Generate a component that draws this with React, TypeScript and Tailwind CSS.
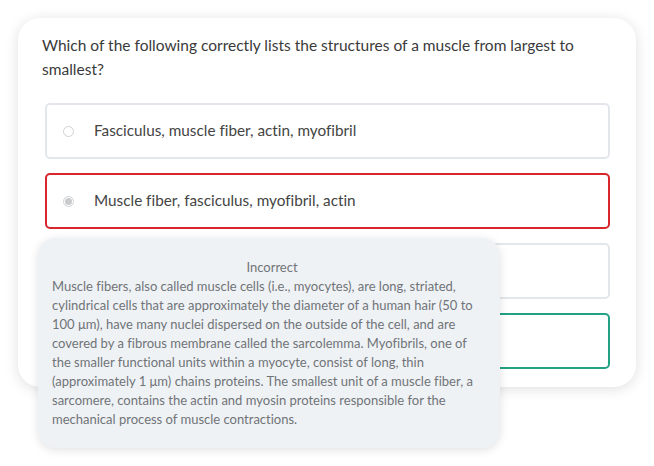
import React from 'react';

interface OptionProps {
  label: string;
  state?: 'idle' | 'wrong' | 'right';
  checked?: boolean;
}

const Option: React.FC<OptionProps> = ({ label, state = 'idle', checked = false }) => {
  const border =
    state === 'wrong'
      ? 'border-[#d9262b]'
      : state === 'right'
      ? 'border-[#23a184]'
      : 'border-[#e3e7eb]';
  return (
    <div className={`flex items-center h-[56px] rounded-[5px] border-2 ${border} bg-white pl-[16px]`}>
      <span className="flex items-center justify-center w-[11px] h-[11px] rounded-full border border-[#cfd2d5] bg-white">
        {checked && <span className="w-[7px] h-[7px] rounded-full bg-[#c8cacc]"></span>}
      </span>
      <span className="ml-[20px] text-[15.3px] text-[#444] leading-none">{label}</span>
    </div>
  );
};

const explanation = [
  'Muscle fibers, also called muscle cells (i.e., myocytes), are long, striated,',
  'cylindrical cells that are approximately the diameter of a human hair (50 to',
  '100 μm), have many nuclei dispersed on the outside of the cell, and are',
  'covered by a fibrous membrane called the sarcolemma. Myofibrils, one of',
  'the smaller functional units within a myocyte, consist of long, thin',
  '(approximately 1 μm) chains proteins. The smallest unit of a muscle fiber, a',
  'sarcomere, contains the actin and myosin proteins responsible for the',
  'mechanical process of muscle contractions.',
];

export default function App() {
  return (
    <div
      className="relative w-[654px] h-[466px] bg-white [font-variant-ligatures:none]"
      style={{ fontFamily: 'Lato, "Liberation Sans", sans-serif' }}
    >
      <div className="pt-[18px] pl-[18px]">
        <div className="w-[618px] rounded-[22px] bg-white shadow-[0_2px_14px_rgba(0,0,0,0.13)] pt-[15px] pb-[18px] pl-[24px] pr-[26px]">
          <p className="text-[15.5px] leading-[24px] text-[#3a3a3a] pr-[20px]">
            Which of the following correctly lists the structures of a muscle from largest to smallest?
          </p>
          <div className="mt-[22px] ml-[3px] flex flex-col gap-[14px]">
            <Option label="Fasciculus, muscle fiber, actin, myofibril" />
            <Option label="Muscle fiber, fasciculus, myofibril, actin" state="wrong" checked />
            <Option label="Fasciculus, muscle fiber, myofibril, actin" />
            <Option label="Muscle fiber, myofibril, fasciculus, actin" state="right" />
          </div>
        </div>
      </div>

      <div className="absolute left-[38px] top-[238px] w-[462px] rounded-[18px] bg-[#eff2f5] shadow-[0_2px_10px_rgba(0,0,0,0.12)] pt-[20px] pb-[19px] pl-[14px] pr-[8px] text-[13px] leading-[19px] text-[#707478]">
        <div className="text-center">Incorrect</div>
        <p>
          {explanation.map((line, i) => (
            <span key={i} className="block whitespace-nowrap">{line}</span>
          ))}
        </p>
      </div>
    </div>
  );
}
